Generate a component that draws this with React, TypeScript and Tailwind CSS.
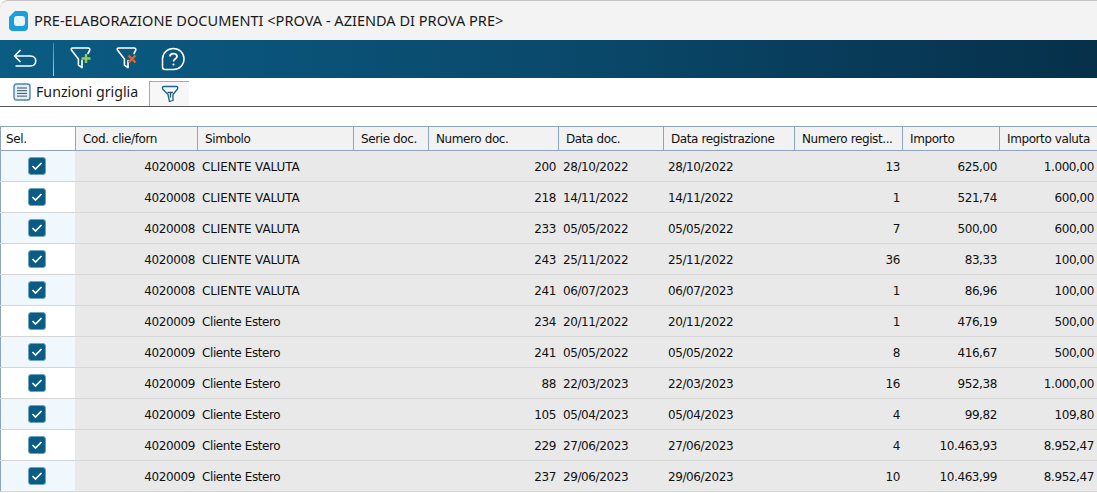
import React from 'react';

const columns = [
    { label: 'Sel.', width: 'w-[75px]', bg: 'bg-white', pad: 'pl-[5px]' },
    { label: 'Cod. clie/forn', width: 'w-[122px]', bg: 'bg-[#f2f2f2]', pad: 'pl-[7px]' },
    { label: 'Simbolo', width: 'w-[156px]', bg: 'bg-[#f2f2f2]', pad: 'pl-[7px]' },
    { label: 'Serie doc.', width: 'w-[75px]', bg: 'bg-[#f2f2f2]', pad: 'pl-[7px]' },
    { label: 'Numero doc.', width: 'w-[130px]', bg: 'bg-[#f2f2f2]', pad: 'pl-[7px]' },
    { label: 'Data doc.', width: 'w-[105px]', bg: 'bg-[#f2f2f2]', pad: 'pl-[7px]' },
    { label: 'Data registrazione', width: 'w-[131px]', bg: 'bg-[#f2f2f2]', pad: 'pl-[7px]' },
    { label: 'Numero regist...', width: 'w-[108px]', bg: 'bg-[#f2f2f2]', pad: 'pl-[7px]' },
    { label: 'Importo', width: 'w-[97px]', bg: 'bg-[#f2f2f2]', pad: 'pl-[7px]' },
    { label: 'Importo valuta', width: 'w-[98px]', bg: 'bg-[#f2f2f2]', pad: 'pl-[7px]' },
];

const rows = [
    ['4020008', 'CLIENTE VALUTA', '200', '28/10/2022', '28/10/2022', '13', '625,00', '1.000,00'],
    ['4020008', 'CLIENTE VALUTA', '218', '14/11/2022', '14/11/2022', '1', '521,74', '600,00'],
    ['4020008', 'CLIENTE VALUTA', '233', '05/05/2022', '05/05/2022', '7', '500,00', '600,00'],
    ['4020008', 'CLIENTE VALUTA', '243', '25/11/2022', '25/11/2022', '36', '83,33', '100,00'],
    ['4020008', 'CLIENTE VALUTA', '241', '06/07/2023', '06/07/2023', '1', '86,96', '100,00'],
    ['4020009', 'Cliente Estero', '234', '20/11/2022', '20/11/2022', '1', '476,19', '500,00'],
    ['4020009', 'Cliente Estero', '241', '05/05/2022', '05/05/2022', '8', '416,67', '500,00'],
    ['4020009', 'Cliente Estero', '88', '22/03/2023', '22/03/2023', '16', '952,38', '1.000,00'],
    ['4020009', 'Cliente Estero', '105', '05/04/2023', '05/04/2023', '4', '99,82', '109,80'],
    ['4020009', 'Cliente Estero', '229', '27/06/2023', '27/06/2023', '4', '10.463,93', '8.952,47'],
    ['4020009', 'Cliente Estero', '237', '29/06/2023', '29/06/2023', '10', '10.463,99', '8.952,47'],
];

function FunnelOutline() {
    return (
        <path
            d="M19 7.5 L20.6 4.5 Q21.4 2 19 2 H4 Q1.2 2 2.8 4.6 L9.4 13 V19 L13 21.6 V14.5"
            stroke="white"
            strokeWidth="1.6"
            strokeLinecap="round"
            strokeLinejoin="round"
        />
    );
}

function AddFilterIcon() {
    return (
        <svg width="24" height="26" viewBox="0 0 24 26" fill="none">
            <FunnelOutline />
            <path d="M17 8 V17 M12.5 12.5 H21.5" stroke="#8fd14f" strokeWidth="2.4" />
        </svg>
    );
}

function RemoveFilterIcon() {
    return (
        <svg width="24" height="26" viewBox="0 0 24 26" fill="none">
            <FunnelOutline />
            <path d="M13.5 9.5 L20.5 16.5 M20.5 9.5 L13.5 16.5" stroke="#e0632c" strokeWidth="2.4" />
        </svg>
    );
}

function HelpIcon() {
    return (
        <svg width="24" height="24" viewBox="0 0 24 24" fill="none">
            <path
                d="M12.5 1.5 A10.5 10.5 0 1 1 12.5 22.5 H4 Q1.5 22.5 1.5 20 V12 A11 10.5 0 0 1 12.5 1.5 Z"
                stroke="white"
                strokeWidth="1.5"
                strokeLinejoin="round"
            />
            <path d="M9 9.4 C9 5.6 16 5.6 16 9.4 C16 11.8 12.5 11.8 12.5 14.6" stroke="white" strokeWidth="1.8" />
            <circle cx="12.5" cy="17.6" r="1.1" fill="white" />
        </svg>
    );
}

function BackIcon() {
    return (
        <svg width="24" height="20" viewBox="0 0 24 20" fill="none">
            <path d="M7.5 1 L1.5 7 L7.5 13" stroke="white" strokeWidth="1.6" strokeLinejoin="round" />
            <path d="M1.5 7 H17.5 C24.5 7 24.5 17 17.5 17 H2.5" stroke="white" strokeWidth="1.6" />
        </svg>
    );
}

function ListIcon() {
    return (
        <svg width="18" height="18" viewBox="0 0 18 18" fill="none">
            <rect x="1" y="1" width="16" height="16" rx="2.5" fill="#e3eef5" stroke="#4d87a8" strokeWidth="1.4" />
            <path d="M4 5 H14 M4 7.7 H14 M4 10.4 H14 M4 13.1 H14" stroke="#35556a" strokeWidth="1" />
        </svg>
    );
}

function GridFilterIcon() {
    return (
        <svg width="18" height="18" viewBox="0 0 18 18" fill="none">
            <path
                d="M3 1.5 H15 Q17.5 1.5 16.5 4 L12 9.5 V15.5 L8.5 16.5 L7 9.5 L1.6 4 Q0.8 1.5 3 1.5 Z"
                stroke="#17648c"
                strokeWidth="1.3"
                strokeLinejoin="round"
            />
            <path d="M6.5 7.5 H12 M9.5 7.5 V12.5" stroke="#35556a" strokeWidth="1.3" />
        </svg>
    );
}

function Logo() {
    return (
        <svg width="19" height="20" viewBox="0 0 19 20">
            <path d="M6 0 H15 Q19 0 19 4 V16 Q19 20 15 20 H4 Q0 20 0 16 V6 Z" fill="#1a9fdc" />
            <rect x="5" y="5" width="11" height="10" rx="3" fill="#eaf5fb" />
        </svg>
    );
}

function CheckBox() {
    return (
        <div className="w-[18px] h-[18px] rounded-[3px] bg-[#0b5c85] border border-[#6ea3c0] flex items-center justify-center">
            <svg width="12" height="10" viewBox="0 0 12 10" fill="none">
                <path d="M1.5 5 L4.5 8 L10.5 2" stroke="white" strokeWidth="1.7" />
            </svg>
        </div>
    );
}

export default function App() {
    return (
        <div className="w-[1097px] h-[493px] overflow-hidden bg-white font-['Noto_Sans',sans-serif] text-[#1a1a1a]">
            <div className="h-10 bg-[#f3f3f3] flex items-center pl-[9px] gap-[6px] text-[14.56px] border-t border-[#c4c4c4] rounded-tl-lg">
                <Logo />
                <span>PRE-ELABORAZIONE DOCUMENTI &lt;PROVA - AZIENDA DI PROVA PRE&gt;</span>
            </div>

            <div className="h-[38px] bg-gradient-to-r from-[#0a5c84] via-[#0a4a6c] to-[#06304a] flex items-center pl-[13px]">
                <BackIcon />
                <div className="w-px h-[33px] bg-gradient-to-b from-[#4d86a5] to-[#b5d0de] ml-[16px] mr-[15px]" />
                <div className="flex items-center gap-[22px]">
                    <AddFilterIcon />
                    <RemoveFilterIcon />
                    <HelpIcon />
                </div>
            </div>

            <div className="h-[29px] flex items-center border-b border-[#555] pl-[13px]">
                <ListIcon />
                <span className="ml-[5px] text-[14.2px]">Funzioni griglia</span>
                <div className="ml-[11px] w-[40px] h-[25px] mt-[2px] bg-[#f7f7f7] border-t border-l border-[#a8a8a8] flex items-center justify-center">
                    <GridFilterIcon />
                </div>
            </div>

            <div className="mt-[19px] font-['DejaVu_Sans',sans-serif] text-[12px] tracking-[-0.4px] text-[#111]">
                <div className="flex h-[25px] border-t border-b border-[#8ea4bd]">
                    {columns.map((col) => (
                        <div
                            key={col.label}
                            className={`${col.width} ${col.bg} ${col.pad} shrink-0 flex items-center border-l border-[#8ea4bd]`}
                        >
                            {col.label}
                        </div>
                    ))}
                </div>
                {rows.map((row, i) => (
                    <div key={i} className="flex h-[31px] border-b border-[#d6d6d6]">
                        <div
                            className={`w-[75px] shrink-0 flex items-center justify-center pr-[2px] border-l border-[#8ea4bd] ${
                                i % 2 === 0 ? 'bg-[#f0f8fe]' : 'bg-white'
                            }`}
                        >
                            <CheckBox />
                        </div>
                        <div className="flex flex-1 bg-[#e9e9e9] items-center pt-[2px]">
                            <div className="w-[122px] shrink-0 text-right pr-[2px]">{row[0]}</div>
                            <div className={`w-[156px] shrink-0 pl-[5px] ${i < 5 ? 'tracking-[-0.1px]' : ''}`}>{row[1]}</div>
                            <div className="w-[75px] shrink-0" />
                            <div className="w-[130px] shrink-0 text-right pr-[2px]">{row[2]}</div>
                            <div className="w-[105px] shrink-0 pl-[5px]">{row[3]}</div>
                            <div className="w-[131px] shrink-0 pl-[5px]">{row[4]}</div>
                            <div className="w-[108px] shrink-0 text-right pr-[2px]">{row[5]}</div>
                            <div className="w-[97px] shrink-0 text-right pr-[2px]">{row[6]}</div>
                            <div className="w-[98px] shrink-0 text-right pr-[3px]">{row[7]}</div>
                        </div>
                    </div>
                ))}
            </div>
        </div>
    );
}
